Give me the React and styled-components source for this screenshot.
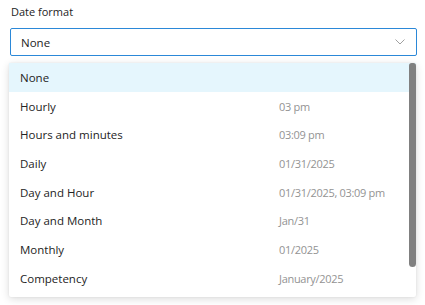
import React from 'react';
import styled, { createGlobalStyle } from 'styled-components';

const Global = createGlobalStyle`
  html, body {
    margin: 0;
    padding: 0;
    background: #fff;
  }
  body {
    font-family: "Open Sans", "Noto Sans", sans-serif;
    color: #242424;
  }
`;

const Page = styled.div`
  width: 425px;
  height: 305px;
  box-sizing: border-box;
  padding: 4px 8px 0 9px;
  overflow: hidden;
`;

const Label = styled.div`
  font-size: 11px;
  line-height: 16px;
  padding-left: 2px;
  margin-bottom: 8px;
`;

const Field = styled.div`
  width: 407px;
  height: 28px;
  margin-left: 1px;
  box-sizing: border-box;
  border: 1px solid #2b88d8;
  border-radius: 2px;
  display: flex;
  align-items: center;
  justify-content: space-between;
  padding: 0 11px 0 10px;
  font-size: 11.5px;
`;

const Menu = styled.div`
  position: relative;
  margin-top: 7px;
  width: 407px;
  background: #fff;
  border-radius: 2px;
  box-shadow: 0 2px 8px rgba(0, 0, 0, 0.14), 0 0 2px rgba(0, 0, 0, 0.08);
  display: flex;
  flex-direction: column;
  padding-bottom: 4px;
`;

const Option = styled.div`
  height: 28.7px;
  display: grid;
  grid-template-columns: 259px 1fr;
  align-items: center;
  padding-left: 11px;
  font-size: 11.5px;
  background: ${p => (p.$selected ? '#e5f6fd' : 'transparent')};
`;

const Hint = styled.span`
  color: #939393;
  font-size: 11px;
  letter-spacing: -0.3px;
`;

const Thumb = styled.div`
  position: absolute;
  right: 0;
  top: 0;
  width: 7px;
  height: 204px;
  background: #808080;
  border-radius: 3px 3px 4px 4px;
`;

const options = [
  ['None', ''],
  ['Hourly', '03 pm'],
  ['Hours and minutes', '03:09 pm'],
  ['Daily', '01/31/2025'],
  ['Day and Hour', '01/31/2025, 03:09 pm'],
  ['Day and Month', 'Jan/31'],
  ['Monthly', '01/2025'],
  ['Competency', 'January/2025'],
];

export default function App() {
  return (
    <Page>
      <Global />
      <Label>Date format</Label>
      <Field>
        <span>None</span>
        <svg width="10" height="6" viewBox="0 0 10 6" fill="none">
          <path d="M0.5 0.5 L5 5 L9.5 0.5" stroke="#a0a0a0" strokeWidth="1" />
        </svg>
      </Field>
      <Menu>
        {options.map(([name, hint], i) => (
          <Option key={name} $selected={i === 0}>
            <span>{name}</span>
            <Hint>{hint}</Hint>
          </Option>
        ))}
        <Thumb />
      </Menu>
    </Page>
  );
}
